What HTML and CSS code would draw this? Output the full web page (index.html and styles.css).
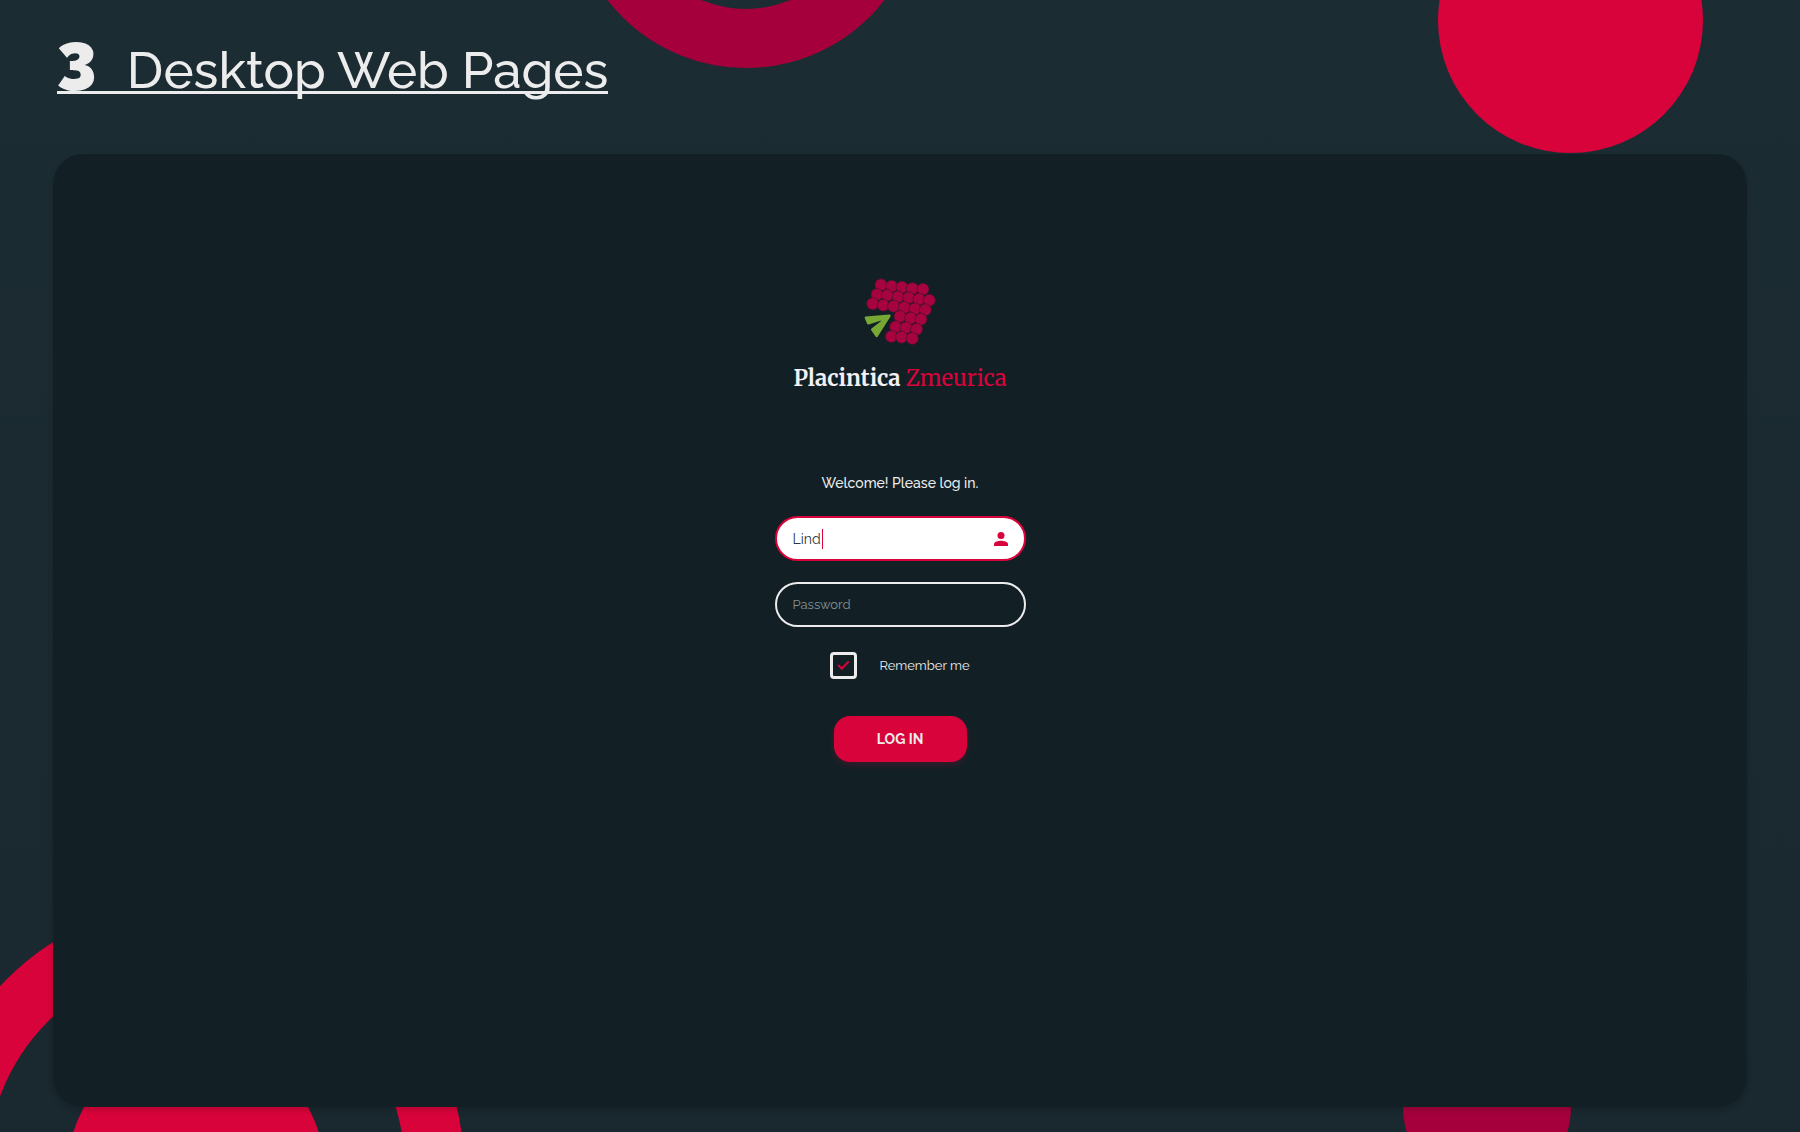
FILE: index.html
```
<!DOCTYPE html>
<html lang="en">
<head>
    <meta charset="UTF-8">
    <meta name="viewport" content="width=device-width, initial-scale=1.0">
    <title>Placintica Zmeurica - Log in</title>
    <link rel="stylesheet" href="styles.css">
</head>
<body>
    <!-- background shapes -->
    <div class="shapes" aria-hidden="true">
        <div class="shape ring-top"></div>
        <div class="shape disc-top"></div>
        <div class="shape ring-bottom"></div>
        <div class="shape disc-left"></div>
        <div class="shape disc-bottom"></div>
    </div>

    <h1 class="page-title"><span class="page-number">3</span><span class="page-name">Desktop Web Pages</span></h1>

    <main class="panel">
        <svg class="logo" viewBox="66 52 222 206" aria-hidden="true">
            <g class="berry">
                <circle cx="120" cy="75" r="18"/><circle cx="152" cy="79" r="18"/><circle cx="183" cy="82" r="18"/><circle cx="214" cy="86" r="18"/><circle cx="246" cy="88" r="18"/>
                <circle cx="108" cy="104" r="18"/><circle cx="139" cy="106" r="18"/><circle cx="171" cy="111" r="18"/><circle cx="203" cy="114" r="18"/><circle cx="234" cy="118" r="18"/><circle cx="265" cy="121" r="18"/>
                <circle cx="95" cy="132" r="18"/><circle cx="127" cy="136" r="18"/><circle cx="158" cy="139" r="18"/><circle cx="190" cy="143" r="18"/><circle cx="222" cy="147" r="18"/><circle cx="253" cy="150" r="18"/>
                <circle cx="177" cy="170" r="18"/><circle cx="209" cy="175" r="18"/><circle cx="240" cy="178" r="18"/>
                <circle cx="164" cy="201" r="18"/><circle cx="195" cy="204" r="18"/><circle cx="227" cy="208" r="18"/>
                <circle cx="151" cy="230" r="18"/><circle cx="182" cy="232" r="18"/><circle cx="214" cy="236" r="18"/>
            </g>
            <path class="leaf" d="M75 174 L145 168 L107 228 L94 209 L123 187 Q129 176 117 179 L82 190 Z"/>
        </svg>
        <p class="brand"><strong>Placintica</strong> <span class="brand-accent">Zmeurica</span></p>

        <form class="login">
            <p class="welcome">Welcome! Please log in.</p>

            <div class="field active">
                <input type="text" class="username" name="username" value="Lind" aria-label="Username">
                <span class="caret"></span>
                <svg class="user-icon" viewBox="0 0 16 16" aria-hidden="true">
                    <circle cx="8" cy="4" r="4"/>
                    <path d="M0 16 V14 C0 11 5 10 8 10 S16 11 16 14 V16 Z"/>
                </svg>
            </div>

            <div class="field">
                <input type="password" class="password" name="password" placeholder="Password" aria-label="Password">
            </div>

            <div class="remember">
                <input type="checkbox" id="remember" name="remember" checked>
                <label for="remember">Remember me</label>
            </div>

            <button type="submit" class="login-button">LOG IN</button>
        </form>
    </main>
</body>
</html>
```
FILE: styles.css
```
* {
    box-sizing: border-box;
}

body {
    position: relative;
    display: flex;
    flex-direction: column;
    min-height: 100vh;
    margin: 0;
    padding: 43px 53px 25px;
    background: linear-gradient(#1c2c33, #1a282f);
    color: #ececec;
    font-family: Raleway, Lato, sans-serif;
}

.shapes {
    position: absolute;
    inset: 0;
    overflow: hidden;
}

.shape {
    position: absolute;
    border-radius: 50%;
}

.ring-top {
    top: -282px;
    left: 571px;
    width: 350px;
    height: 350px;
    border: 59px solid #a6003c;
}

.disc-top {
    top: -112px;
    right: 97px;
    width: 265px;
    height: 265px;
    background: #d9033b;
}

.ring-bottom {
    bottom: -305px;
    left: -72px;
    width: 536px;
    height: 536px;
    border: 59px solid #d9033b;
}

.disc-left {
    bottom: -165px;
    left: 68px;
    width: 256px;
    height: 256px;
    background: #d9033b;
}

.disc-bottom {
    bottom: -59px;
    right: 229px;
    width: 168px;
    height: 168px;
    background: #a6003c;
}

.page-title {
    position: relative;
    display: flex;
    align-items: flex-end;
    align-self: flex-start;
    gap: 30px;
    margin: 0 0 60px 4px;
    border-bottom: 3px solid #ececec;
    font-size: 51px;
    font-weight: 500;
    line-height: 42px;
}

.page-number {
    font-size: 68px;
    font-weight: 900;
    font-variant-numeric: lining-nums;
    line-height: 48px;
}

.panel {
    position: relative;
    display: flex;
    flex: 1;
    flex-direction: column;
    align-items: center;
    padding: 123px 24px 24px;
    border-radius: 30px;
    background: #122026;
    box-shadow: 0 3px 6px rgba(0, 0, 0, 0.16);
}

.logo {
    width: 74px;
    height: 69px;
}

.berry {
    fill: #a6033f;
    stroke: #4a1030;
    stroke-width: 2;
}

.leaf {
    fill: #78a834;
    stroke: #78a834;
    stroke-width: 8;
    stroke-linejoin: round;
}

.brand {
    margin: 16px 0 79px;
    color: #f2f0f4;
    font-family: Merriweather, "Liberation Serif", serif;
    font-size: 22px;
    line-height: 32px;
}

.brand-accent {
    color: #d9033b;
}

.login {
    display: flex;
    flex-direction: column;
    align-items: center;
}

.welcome {
    margin: 0 0 23px;
    font-size: 14px;
    font-weight: 500;
    line-height: 20px;
}

.field {
    display: flex;
    align-items: center;
    width: 251px;
    height: 45px;
    margin-bottom: 21px;
    padding: 0 16px;
    border: 2px solid #ececec;
    border-radius: 23px;
}

.field input {
    min-width: 0;
    padding: 0;
    border: none;
    outline: none;
    background: transparent;
    color: #2b393f;
    font: inherit;
    font-size: 14px;
}

.field.active {
    border-color: #d9033b;
    background: #fff;
}

.username {
    field-sizing: content;
}

.field .password {
    flex: 1;
    font-size: 13px;
}

.password::placeholder {
    color: #87908f;
}

.caret {
    width: 1px;
    height: 20px;
    margin-left: 1px;
    background: #d9033b;
}

.user-icon {
    width: 14px;
    height: 14px;
    margin-left: auto;
    fill: #d9033b;
}

.remember {
    display: flex;
    align-items: center;
    gap: 22px;
    margin: 4px 0 37px;
    font-size: 13px;
}

.remember input {
    display: grid;
    place-items: center;
    width: 27px;
    height: 27px;
    margin: 0;
    border: 3px solid #ececec;
    border-radius: 4px;
    appearance: none;
}

.remember input:checked::before {
    content: "";
    width: 9px;
    height: 4px;
    margin-bottom: 4px;
    border-bottom: 2px solid #d9033b;
    border-left: 2px solid #d9033b;
    transform: rotate(-45deg);
}

.login-button {
    width: 133px;
    height: 46px;
    border: none;
    border-radius: 16px;
    background: #d9033b;
    box-shadow: 0 3px 6px rgba(217, 3, 59, 0.2);
    color: #ececec;
    font-family: inherit;
    font-size: 14px;
    font-weight: 700;
    cursor: pointer;
}
```
